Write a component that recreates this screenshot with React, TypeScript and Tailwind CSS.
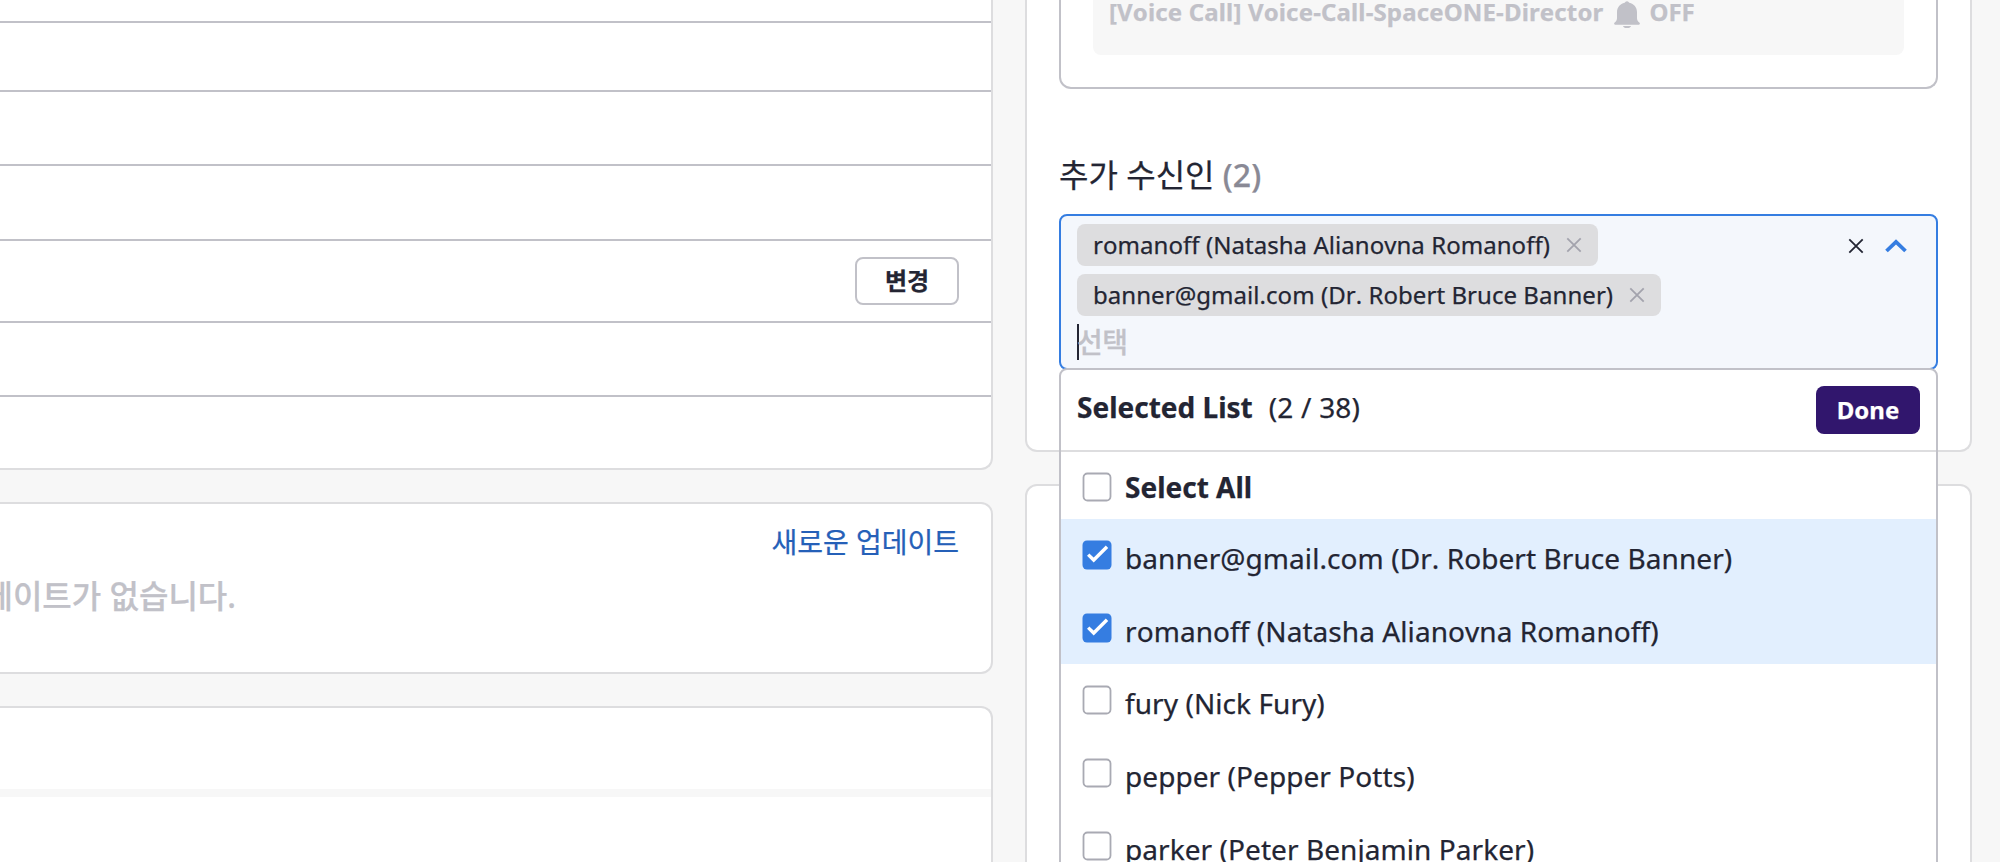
const rows = [
  { h: 'h-[21px]' },
  { h: 'h-[67px]' },
  { h: 'h-[72px]' },
  { h: 'h-[73px]' },
  { h: 'h-[80px]', action: '변경' },
  { h: 'h-[72px]' },
];

const tags = ['romanoff (Natasha Alianovna Romanoff)', 'banner@gmail.com (Dr. Robert Bruce Banner)'];

const users = [
  { name: 'banner@gmail.com (Dr. Robert Bruce Banner)', checked: true, h: 'h-[73px]' },
  { name: 'romanoff (Natasha Alianovna Romanoff)', checked: true, h: 'h-[72px]' },
  { name: 'fury (Nick Fury)', checked: false, h: 'h-[73px]' },
  { name: 'pepper (Pepper Potts)', checked: false, h: 'h-[73px]' },
  { name: 'parker (Peter Benjamin Parker)', checked: false, h: 'h-[73px]' },
];

function Checkbox({ checked }: { checked: boolean }) {
  return (
    <svg width="30" height="30" viewBox="0 0 30 30" fill="none" className="shrink-0">
      {checked ? (
        <>
          <rect x="0.5" y="0.5" width="29" height="29" rx="4.5" fill="#357de1" />
          <path d="M6.2 14.6 L11.7 20 L25 6.8" stroke="#fff" strokeWidth="3.4" />
        </>
      ) : (
        <rect x="1.5" y="1.5" width="27" height="27" rx="4" fill="#fff" stroke="#a9aab3" strokeWidth="1.8" />
      )}
    </svg>
  );
}

function Cross({ className }: { className: string }) {
  return (
    <svg width="16" height="16" viewBox="0 0 16 16" fill="none" className={className}>
      <path d="M1.3 1.3 L14.7 14.7 M14.7 1.3 L1.3 14.7" stroke="currentColor" strokeWidth="1.8" />
    </svg>
  );
}

function Bell() {
  return (
    <svg width="26" height="27" viewBox="0 0 26 27" fill="currentColor">
      <path d="M13 0.300c1.200 0 1.700 1 2.300 1.500 4.700 1.200 7.700 4.600 7.700 9.400v6c0 2 1 3.200 2.300 4.200 1 .8.700 2.400-.8 2.400H1.500C0 23.800-.3 22.200.7 21.400 2 20.400 3 19.200 3 17.200v-6c0-4.800 3-8.200 7.700-9.400C11.300 1.300 11.800.3 13 .3z" />
      <path d="M9 25h8c-.6 1.500-2 2.200-4 2.200s-3.400-.7-4-2.200z" />
    </svg>
  );
}

export default function App() {
  return (
    <div className="flex h-[862px] w-[2000px] gap-8 overflow-hidden bg-[#f7f7f7] font-['Noto_Sans','Noto_Sans_CJK_KR',sans-serif] text-[#232533] [-webkit-text-stroke:0.25px] [font-kerning:none]">
      <div className="flex w-[993px] shrink-0 flex-col gap-8">
        <section className="h-[470px] shrink-0 rounded-br-xl border-r-2 border-b-2 border-[#dddddf] bg-white">
          {rows.map((row, i) => (
            <div key={i} className={`${row.h} box-content flex items-center justify-end border-b-2 border-[#c1c1c8] pr-[32px]`}>
              {row.action && (
                <button className="flex h-12 w-[104px] items-center justify-center rounded-lg border-2 border-[#c1c1c8] bg-white text-2xl font-bold">
                  {row.action}
                </button>
              )}
            </div>
          ))}
        </section>
        <section className="h-[172px] shrink-0 rounded-r-xl border-y-2 border-r-2 border-[#dddddf] bg-white pt-5 pr-8">
          <div className="text-right text-[28px] leading-9 text-[#2560b8]">새로운 업데이트</div>
          <div className="mt-4 flex w-[236px] justify-end text-[32px] leading-10 font-medium whitespace-nowrap text-[#c1c1c8]">
            업데이트가 없습니다.
          </div>
        </section>
        <section className="h-[180px] shrink-0 rounded-tr-xl border-t-2 border-r-2 border-[#dddddf] bg-white">
          <div className="h-[89px] border-b-8 border-[#f7f7f7]" />
        </section>
      </div>

      <div className="flex w-[947px] shrink-0 flex-col gap-8">
        <section className="h-[452px] shrink-0 rounded-b-xl border-x-2 border-b-2 border-[#dddddf] bg-white px-8">
          <div className="h-[89px] rounded-b-xl border-x-2 border-b-2 border-[#c1c1c8] px-8">
            <div className="flex h-[55px] gap-[11px] rounded-b-lg bg-[#f7f7f7] pl-4 text-2xl leading-6 font-bold text-[#c1c1c8]">
              <span className="tracking-[0.15px]">[Voice Call] Voice-Call-SpaceONE-Director</span>
              <span className="pt-px"><Bell /></span>
              <span className="-ml-0.5">OFF</span>
            </div>
          </div>
          <h2 className="mt-[62px] h-[63px] text-[32px] leading-[48px]">
            추가 수신인 <span className="font-medium text-[#898995]">(2)</span>
          </h2>
          <div className="relative">
            <div className="flex h-[156px] justify-between rounded-lg border-2 border-[#357de1] bg-[#f4f7fc] pt-2 pr-[29px] pl-4">
              <div className="flex flex-col items-start gap-2">
                {tags.map((tag) => (
                  <div key={tag} className="flex h-[42px] items-center gap-4 rounded-lg bg-[#dddddf] px-4 text-2xl">
                    <span className="tracking-[0.05px]">{tag}</span>
                    <Cross className="text-[#a3a3ad]" />
                  </div>
                ))}
                <div className="flex h-9 items-center border-l-2 border-[#232533] text-[28px] leading-9 text-[#c1c1c8]">
                  <span className="-ml-0.5 font-medium tracking-[-0.5px]">선택</span>
                </div>
              </div>
              <div className="flex h-11 items-center gap-[21px]">
                <Cross className="text-[#232533]" />
                <svg width="22" height="14" viewBox="0 0 22 14" fill="none">
                  <path d="M1.500 12 L11 2.900 L20.500 12" stroke="#357de1" strokeWidth="3.800" />
                </svg>
              </div>
            </div>
            <div className="absolute top-[154px] right-0 left-0 h-[520px] overflow-hidden rounded-t-lg border-2 border-[#c1c1c8] bg-white">
              <div className="flex h-[82px] justify-between border-b-2 border-[#dddddf] pr-4 pl-4">
                <div className="flex gap-4 pt-[17px] text-[28px] leading-10">
                  <span className="font-bold">Selected List</span>
                  <span className="tracking-[0.2px]">(2 / 38)</span>
                </div>
                <button className="mt-4 h-12 w-[104px] rounded-lg bg-[#31166d] text-2xl font-bold text-white">Done</button>
              </div>
              <div className="flex h-[67px] gap-[13px] pt-5 pl-[21px] text-[28px] font-bold">
                <Checkbox checked={false} />
                <span className="-mt-[3px] leading-9">Select All</span>
              </div>
              {users.map((user) => (
                <div
                  key={user.name}
                  className={`${user.h} flex gap-[13px] pt-[21px] pl-[21px] text-[28px] ${user.checked ? 'bg-[#e2effe]' : 'bg-white'}`}
                >
                  <Checkbox checked={user.checked} />
                  <span className="-mt-0.5 leading-10 tracking-[0.07px]">{user.name}</span>
                </div>
              ))}
            </div>
          </div>
        </section>
        <section className="h-[400px] shrink-0 rounded-t-xl border-2 border-[#dddddf] bg-white" />
      </div>
    </div>
  );
}
